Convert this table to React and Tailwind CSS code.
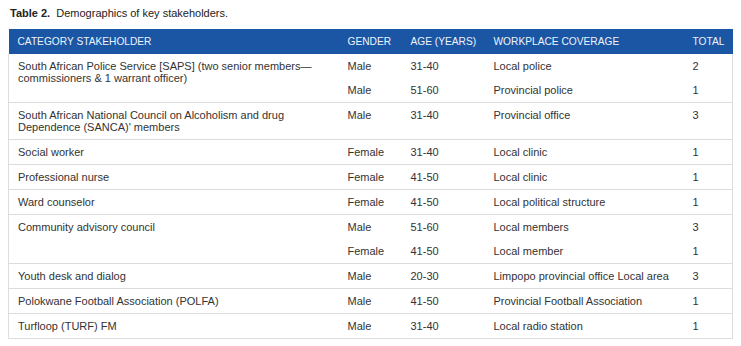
/* Table 2 — demographics of key stakeholders */

const COLS = [
  { k: "cat", label: "CATEGORY STAKEHOLDER", w: "w-[330px]" },
  { k: "gender", label: "GENDER", w: "w-[63px]" },
  { k: "age", label: "AGE (YEARS)", w: "w-[83px]" },
  { k: "place", label: "WORKPLACE COVERAGE", w: "w-[199px]" },
  { k: "total", label: "TOTAL", w: "w-[49px]" },
];

const GROUPS = [
  {
    cat: "South African Police Service [SAPS] (two senior members—commissioners & 1 warrant officer)",
    rows: [
      ["Male", "31-40", "Local police", "2"],
      ["Male", "51-60", "Provincial police", "1"],
    ],
  },
  {
    cat: "South African National Council on Alcoholism and drug Dependence (SANCA)' members",
    rows: [["Male", "31-40", "Provincial office", "3"]],
  },
  { cat: "Social worker", rows: [["Female", "31-40", "Local clinic", "1"]] },
  { cat: "Professional nurse", rows: [["Female", "41-50", "Local clinic", "1"]] },
  { cat: "Ward counselor", rows: [["Female", "41-50", "Local political structure", "1"]] },
  {
    cat: "Community advisory council",
    rows: [
      ["Male", "51-60", "Local members", "3"],
      ["Female", "41-50", "Local member", "1"],
    ],
  },
  { cat: "Youth desk and dialog", rows: [["Male", "20-30", "Limpopo provincial office Local area", "3"]] },
  { cat: "Polokwane Football Association (POLFA)", rows: [["Male", "41-50", "Provincial Football Association", "1"]] },
  { cat: "Turfloop (TURF) FM", rows: [["Male", "31-40", "Local radio station", "1"]] },
];

const td = "align-top pl-[9px] pr-[6px] py-[6px] leading-[12px]";

export default function App() {
  return (
    <div className="w-[741px] h-[346px] bg-white px-[8px] pt-[5px] text-[#333] font-['Liberation_Sans',Arial,sans-serif]">
      <div className="pl-[2px] text-[11px] leading-[16px] text-[#222]">
        <b>Table 2.</b>&nbsp; Demographics of key stakeholders.
      </div>

      <table className="mt-[8px] w-[724px] table-fixed border-collapse text-[11px]">
        <colgroup>
          {COLS.map((c) => (
            <col key={c.k} className={c.w} />
          ))}
        </colgroup>
        <thead>
          <tr className="bg-[#1a56a4] text-[#eef3fb]">
            {COLS.map((c) => (
              <th key={c.k} className="text-left font-normal text-[10.2px] pl-[9px] pr-[4px] py-[6.5px] leading-[12px] whitespace-nowrap">
                {c.label}
              </th>
            ))}
          </tr>
        </thead>
        <tbody className="border-x border-b border-[#dedede]">
          {GROUPS.map((g, gi) =>
            g.rows.map((r, ri) => (
              <tr key={gi + "-" + ri} className={ri === 0 && gi > 0 ? "border-t border-[#dcdcdc]" : ""}>
                {ri === 0 && (
                  <td rowSpan={g.rows.length} className={td + " pr-[20px]"}>
                    {g.cat}
                  </td>
                )}
                {r.map((v, i) => (
                  <td key={i} className={td + " whitespace-nowrap"}>{v}</td>
                ))}
              </tr>
            ))
          )}
        </tbody>
      </table>
    </div>
  );
}
